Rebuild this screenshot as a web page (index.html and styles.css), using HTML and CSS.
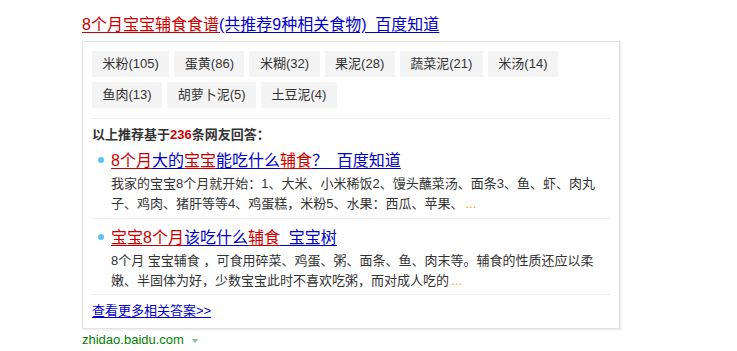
FILE: index.html
```html
<!DOCTYPE html>
<html lang="zh-CN">
<head>
<meta charset="utf-8">
<title>8个月宝宝辅食食谱</title>
<link rel="stylesheet" href="styles.css">
</head>
<body>
<div class="result">
  <h3 class="title"><a href="#"><em>8个月宝宝辅食食谱</em><span>(共推荐9种相关食物)&nbsp;&nbsp;百度知道</span></a></h3>
  <div class="box">
    <div class="tags">
      <span class="tag">米粉(105)</span>
      <span class="tag">蛋黄(86)</span>
      <span class="tag">米糊(32)</span>
      <span class="tag">果泥(28)</span>
      <span class="tag">蔬菜泥(21)</span>
      <span class="tag">米汤(14)</span>
      <span class="tag">鱼肉(13)</span>
      <span class="tag">胡萝卜泥(5)</span>
      <span class="tag">土豆泥(4)</span>
    </div>
    <div class="answers">
      <div class="heading">以上推荐基于<span class="num">236</span>条网友回答：</div>
      <ul class="list">
        <li class="item">
          <span class="dot"></span>
          <div class="item-body">
            <a class="item-title" href="#"><em>8个月</em><span>大的</span><em>宝宝</em><span>能吃什么</span><em>辅食</em><span>？&nbsp;&nbsp;百度知道</span></a>
            <p class="desc">我家的宝宝8个月就开始：1、大米、小米稀饭2、馒头蘸菜汤、面条3、鱼、虾、肉丸子、鸡肉、猪肝等等4、鸡蛋糕，米粉5、水果：西瓜、苹果、<span class="more">...</span></p>
          </div>
        </li>
        <li class="item">
          <span class="dot"></span>
          <div class="item-body">
            <a class="item-title" href="#"><em>宝宝8个月</em><span>该吃什么</span><em>辅食</em><span>&nbsp;&nbsp;宝宝树</span></a>
            <p class="desc">8个月 宝宝辅食 ，可食用碎菜、鸡蛋、粥、面条、鱼、肉末等。辅食的性质还应以柔嫩、半固体为好，少数宝宝此时不喜欢吃粥，而对成人吃的<span class="more">...</span></p>
          </div>
        </li>
      </ul>
      <a class="see-more" href="#">查看更多相关答案&gt;&gt;</a>
    </div>
  </div>
  <div class="source"><span class="url">zhidao.baidu.com</span><span class="arrow"></span></div>
</div>
</body>
</html>
```

FILE: styles.css
```css
html, body {
  margin: 0;
  padding: 0;
  background: #fff;
}

body {
  font-family: "Liberation Sans", "Noto Sans CJK SC", sans-serif;
  font-size: 13px;
  color: #333;
}

.result {
  margin-left: 82px;
  padding-top: 14px;
  width: 538px;
}

.title {
  margin: 0 0 5px;
  font-size: 16px;
  font-weight: normal;
  line-height: 22px;
  white-space: nowrap;
}

.title a,
.item-title {
  text-decoration: none;
  color: #00c;
}

.title a em,
.title a span,
.item-title em,
.item-title span {
  font-style: normal;
  text-decoration: underline;
  text-underline-offset: 2px;
}

.title a em,
.item-title em {
  color: #c00;
}

.box {
  border: 1px solid #e3e3e3;
  box-shadow: 1px 1px 2px rgba(0, 0, 0, 0.1);
  padding: 9px 9px 7px;
}

.tags {
  display: flex;
  flex-wrap: wrap;
  gap: 5px;
}

.tag {
  display: block;
  height: 26px;
  line-height: 26px;
  padding: 0 10.5px;
  background: #f4f4f4;
  color: #333;
  white-space: nowrap;
}

.answers {
  margin-top: 10px;
  border-top: 1px solid #ececec;
}

.heading {
  padding-top: 6px;
  line-height: 20px;
  font-weight: bold;
  color: #333;
}

.num {
  color: #c00;
}

.list {
  list-style: none;
  margin: 0;
  padding: 0;
}

.item {
  display: flex;
  padding: 5px 0 4px;
  border-bottom: 1px solid #ececec;
}

.item + .item {
  padding: 8px 0 3px;
}

.dot {
  flex: none;
  width: 6px;
  height: 6px;
  margin: 7px 7px 0 6px;
  border-radius: 50%;
  background: #5cc2f7;
}

.item-body {
  flex: 1;
  min-width: 0;
}

.item-title {
  display: block;
  font-size: 16px;
  line-height: 22px;
  white-space: nowrap;
}

.desc {
  margin: 2px 0 0;
  width: 490px;
  line-height: 20px;
  color: #333;
}

.more {
  margin-left: 2px;
  color: #f90;
}

.see-more {
  display: inline-block;
  margin-top: 6px;
  line-height: 20px;
  color: #00c;
  text-decoration: underline;
  text-underline-offset: 2px;
}

.source {
  display: flex;
  align-items: center;
  height: 22px;
  line-height: 20px;
}

.url {
  color: #008000;
  font-size: 13px;
}

.arrow {
  width: 0;
  height: 0;
  margin-left: 8px;
  margin-top: 2px;
  border-left: 3.5px solid transparent;
  border-right: 3.5px solid transparent;
  border-top: 4px solid #77c477;
}
```
